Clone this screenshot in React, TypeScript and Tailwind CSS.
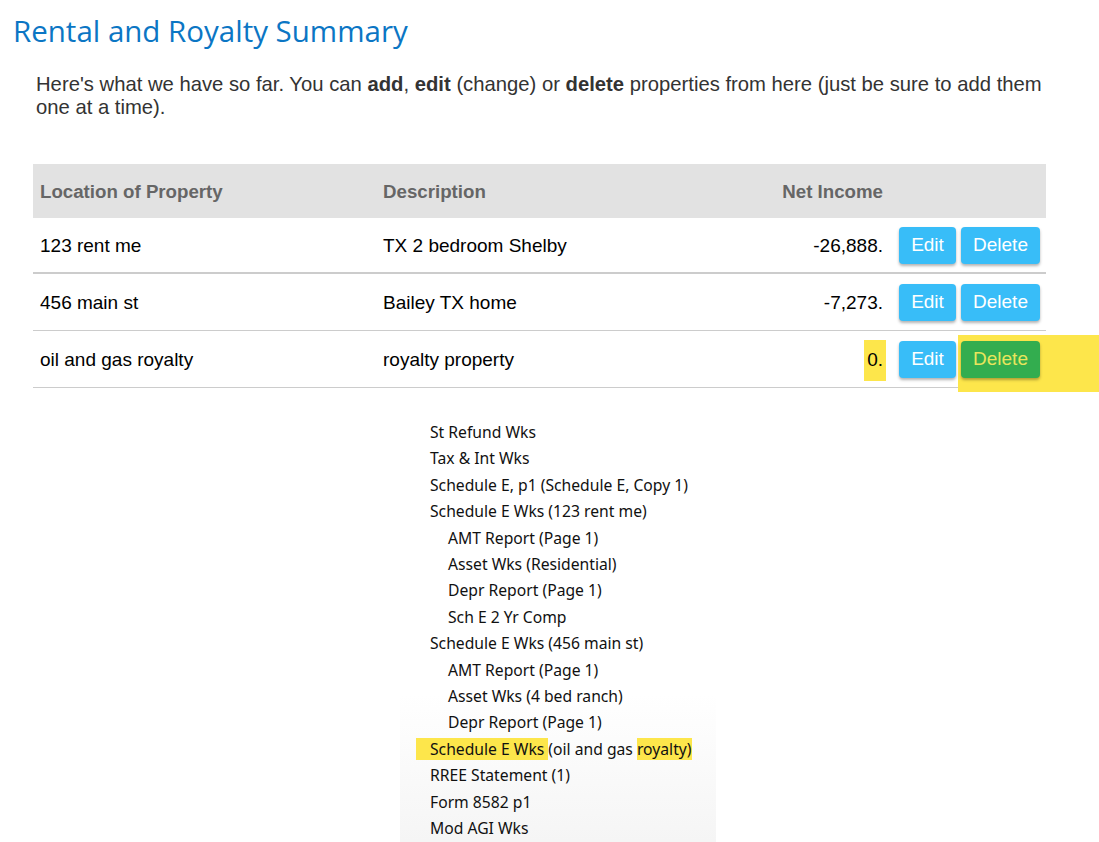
import React from "react";

type Row = {
	location: string;
	description: string;
	net: string;
	flagged?: boolean;
};

const rows: Row[] = [
	{ location: "123 rent me", description: "TX 2 bedroom Shelby", net: "-26,888." },
	{ location: "456 main st", description: "Bailey TX home", net: "-7,273." },
	{ location: "oil and gas royalty", description: "royalty property", net: "0.", flagged: true },
];

const forms: { label: string; indent?: boolean }[] = [
	{ label: "St Refund Wks" },
	{ label: "Tax & Int Wks" },
	{ label: "Schedule E, p1 (Schedule E, Copy 1)" },
	{ label: "Schedule E Wks (123 rent me)" },
	{ label: "AMT Report (Page 1)", indent: true },
	{ label: "Asset Wks (Residential)", indent: true },
	{ label: "Depr Report (Page 1)", indent: true },
	{ label: "Sch E 2 Yr Comp", indent: true },
	{ label: "Schedule E Wks (456 main st)" },
	{ label: "AMT Report (Page 1)", indent: true },
	{ label: "Asset Wks (4 bed ranch)", indent: true },
	{ label: "Depr Report (Page 1)", indent: true },
];

const forms2 = ["RREE Statement (1)", "Form 8582 p1", "Mod AGI Wks"];

function App() {
	return (
		<div className="min-h-[842px] bg-white pt-[13px] font-['Liberation_Sans',Arial,sans-serif]">
			<h1 className="ml-[13px] font-['Open_Sans',sans-serif] text-[29.5px] leading-[36px] text-[#0b76c4]">
				Rental and Royalty Summary
			</h1>

			<p className="ml-[36px] mt-[24px] w-[1015px] text-[20.25px] leading-[23px] text-[#333]">
				Here's what we have so far. You can <b>add</b>, <b>edit</b> (change) or <b>delete</b> properties from
				here (just be sure to add them one at a time).
			</p>

			<div className="ml-[33px] mt-[45px] w-[1013px]">
				<div className="flex h-[54px] items-center bg-[#e2e2e2] pt-[2px] text-[18.7px] font-bold text-[#666]">
					<div className="w-[343px] pl-[7px]">Location of Property</div>
					<div className="w-[340px] pl-[7px]">Description</div>
					<div className="w-[167px] text-right">Net Income</div>
				</div>
				{rows.map((r, i) => (
					<div
						key={i}
						className={`flex items-center text-[19px] text-black ${
							i === 0 ? "h-[56px] border-b-2 border-[#ccc]" : "h-[57px] border-b border-[#ccc]"
						}`}
					>
						<div className="w-[343px] pl-[7px] pt-[3px]">{r.location}</div>
						<div className="w-[340px] pl-[7px] pt-[3px]">{r.description}</div>
						<div className="flex w-[167px] justify-end pt-[3px]">
							<span className={r.flagged ? "-mr-[3px] bg-[#fde64b] px-[3px] py-[6px]" : ""}>{r.net}</span>
						</div>
						<div className="ml-[16px] flex gap-[5px]">
							<button className="h-[37px] w-[57px] rounded-[4px] bg-[#38bdf8] text-[19px] text-white shadow-[0_2px_3px_rgba(0,0,0,0.3)]">
								Edit
							</button>
							<div className="relative">
								{r.flagged && (
									<div className="absolute -left-[3px] -top-[6px] h-[57px] w-[141px] bg-[#fde64b]" />
								)}
								<button
									className={`relative h-[37px] w-[79px] rounded-[4px] text-[19px] shadow-[0_2px_3px_rgba(0,0,0,0.3)] ${
										r.flagged ? "bg-[#33ad4f] text-[#e8e55c]" : "bg-[#38bdf8] text-white"
									}`}
								>
									Delete
								</button>
							</div>
						</div>
					</div>
				))}
			</div>

			<div className="ml-[400px] mt-[31px] w-[316px] bg-linear-to-b from-white from-65% to-[#f5f5f5] pl-[30px] font-['Noto_Sans',sans-serif] text-[15.7px] leading-[26.4px] text-[#111]">
				{forms.map((f, i) => (
					<div key={i} className={f.indent ? "pl-[18px]" : ""}>
						{f.label}
					</div>
				))}
				<div>
					<span className="-ml-[14px] bg-[#fde64b] pl-[14px] pr-[4px]">Schedule E Wks</span>
					<span>(oil and gas </span>
					<span className="bg-[#fde64b]">royalty)</span>
				</div>
				{forms2.map((f, i) => (
					<div key={i}>{f}</div>
				))}
			</div>
		</div>
	);
}

export default App;
